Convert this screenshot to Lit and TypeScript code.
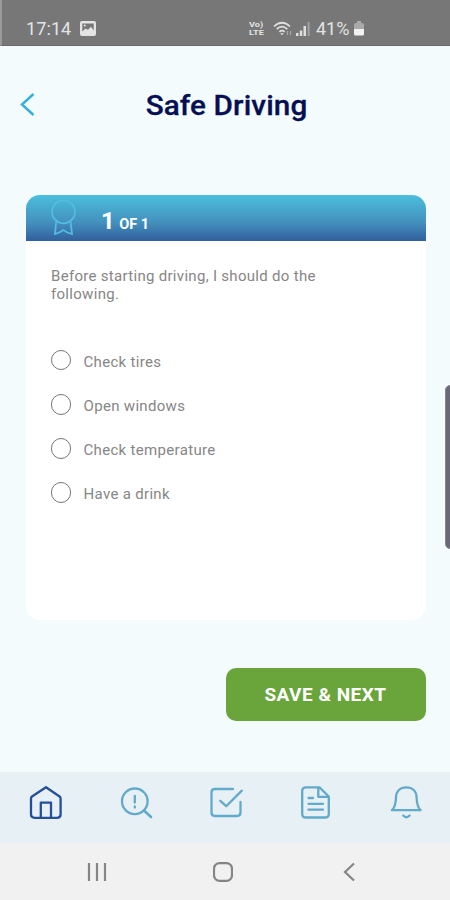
import { LitElement, html, css, svg } from "lit";
import { customElement, state } from "lit/decorators.js";

const OPTIONS = ["Check tires", "Open windows", "Check temperature", "Have a drink"];

const NAV_ICONS = [
  svg`<path d="M18 3.2 L31.6 12.5 Q32.6 13.3 32.6 14.7 V30.5 Q32.6 33.8 29 33.8 H6.6 Q3 33.8 3 30.5 V14.7 Q3 13.3 4 12.5 Z M12.8 33.3 V18.6 H23 V33.3"/>`,
  svg`<circle cx="16.8" cy="17.3" r="12.8"/><path d="M26 26.5 L33 33" stroke-width="2.6"/><path d="M16.8 11.8 V18.6 M16.8 22.4 V23.6"/>`,
  svg`<path d="M25 5 H7 Q3.5 5 3.5 8.5 V28.5 Q3.5 32 7 32 H29 Q32.5 32 32.5 28.5 V18 M12.3 16.8 L18.2 22.2 L33.8 6.6"/>`,
  svg`<path d="M21.5 3.4 H8 Q4.2 3.4 4.2 7.3 V29.7 Q4.2 33.5 8 33.5 H27 Q30.8 33.5 30.8 29.7 V12.5 Z M20.3 4.1 V12.8 H30 M10.5 14 H15 M10.5 19.8 H25 M10.5 25.7 H25"/>`,
  svg`<path d="M4 26.2 C7 23.5 7.8 18.5 8 13.5 C8.2 7.3 12 3.4 18.3 3.4 C24.6 3.4 28.4 7.3 28.6 13.5 C28.8 18.5 29.6 23.5 32.6 26.2 Z M15.2 31.5 Q18.4 35 21.6 31.5"/>`,
];

@customElement("app-root")
export class AppRoot extends LitElement {
  @state() private selected = -1;

  static styles = css`
    :host {
      display: flex;
      flex-direction: column;
      position: relative;
      box-sizing: border-box;
      width: 450px;
      height: 900px;
      overflow: hidden;
      background: #f3fbfd;
      font-family: Roboto, "Liberation Sans", sans-serif;
    }
    svg { display: block; fill: none; flex: none; }
    .status {
      height: 46px;
      box-sizing: border-box;
      padding: 12px 0 0 24px;
      border-left: 2px solid #9b9b9b;
      border-bottom: 1px solid #6b6b6b;
      background: #777;
      display: flex;
      align-items: center;
      color: #e4e4e4;
      font-size: 18px;
    }
    .time { width: 46px; letter-spacing: 0.1px; }
    .photo { margin-left: 8px; }
    .volte {
      margin-left: 153px;
      width: 17px;
      display: grid;
      grid-template-rows: 8px 8px;
      font-size: 8px;
      line-height: 8px;
      font-weight: 700;
    }
    .volte span { transform: scaleX(1.15); transform-origin: left; }
    .wifi { margin-left: 7px; }
    .signal { margin-left: 3px; }
    .pct { margin-left: 6px; width: 35px; }
    .battery { margin-left: 3px; }
    .head {
      height: 118px;
      box-sizing: border-box;
      display: grid;
      grid-template-columns: 72px 1fr 70px;
      align-items: center;
      padding-left: 20px;
    }
    .title {
      margin: 1px 19px 0 0;
      text-align: center;
      font-size: 28px;
      line-height: 34px;
      font-weight: 500;
      letter-spacing: 0.1px;
      -webkit-text-stroke: 0.3px #060f52;
      transform: scaleX(1.06);
      color: #060f52;
    }
    .card {
      margin: 31px 24.5px 0 26px;
      height: 425px;
      border-radius: 14px;
      background: #fff;
      overflow: hidden;
    }
    .banner {
      height: 46px;
      display: flex;
      align-items: center;
      padding-left: 23px;
      background: linear-gradient(#4bbfdd, #4390bd 60%, #315f9d);
      color: #fff;
    }
    .count {
      margin-left: 24px;
      padding-top: 10px;
      font-size: 24px;
      line-height: 28px;
      font-weight: 700;
      white-space: nowrap;
    }
    .count span { font-size: 14.5px; margin-left: -1.5px; }
    .question {
      margin: 27px 0 0 25px;
      width: 290px;
      font-size: 15px;
      line-height: 17.5px;
      letter-spacing: 0.3px;
      color: #868686;
    }
    .options {
      margin-top: 35px;
      padding-left: 24.5px;
    }
    .option {
      height: 44.2px;
      display: flex;
      align-items: center;
      gap: 12.5px;
      font-size: 15px;
      letter-spacing: 0.32px;
      color: #868686;
    }
    .radio {
      width: 20.5px;
      height: 20.5px;
      box-sizing: border-box;
      border: 1.4px solid #777;
      border-radius: 50%;
    }
    .radio.on { box-shadow: inset 0 0 0 4px #fff; background: #2b5a9a; }
    .label { padding-top: 3px; }
    .save {
      align-self: flex-end;
      margin: 48px 24.5px 0 0;
      width: 200px;
      height: 53px;
      padding: 0;
      border: 0;
      border-radius: 10px;
      background: #69a53b;
      color: #fff;
      font: 700 19px/54px Roboto, "Liberation Sans", sans-serif;
      letter-spacing: 0.5px;
    }
    .nav {
      margin-top: auto;
      height: 71px;
      box-sizing: border-box;
      padding: 12px 0 0 0.5px;
      display: grid;
      grid-template-columns: repeat(5, 90px);
      justify-items: center;
      background: #e7f0f5;
      color: #62aac9;
      flex: none;
    }
    .nav svg { stroke: currentColor; stroke-width: 2.3; stroke-linejoin: round; stroke-linecap: round; }
    .nav .active { color: #254f98; }
    .system {
      height: 57px;
      flex: none;
      box-sizing: border-box;
      display: flex;
      align-items: center;
      gap: 106px;
      padding-left: 87px;
      background: #f1f1f1;
    }
    .system svg { stroke: #858585; stroke-width: 2.2; }
    .handle {
      position: absolute;
      right: -5px;
      top: 385px;
      width: 10px;
      height: 164px;
      box-sizing: border-box;
      border: 1px solid #858591;
      border-radius: 5px;
      background: #6a6878;
    }
  `;

  render() {
    return html`
      <div class="status">
        <span class="time">17:14</span>
        <svg class="photo" width="16" height="15" viewBox="0 0 16 15">
          <rect width="16" height="15" rx="2" fill="#e4e4e4" />
          <path d="M2.3 2.5 H13.7 V9.5 L11 5.8 L8 8.8 L5.5 7.5 L2.3 10.5 Z" fill="#777" />
          <circle cx="4.7" cy="4.5" r="1.1" fill="#e4e4e4" />
        </svg>
        <span class="volte"><span>Vo)</span><span>LTE</span></span>
        <svg class="wifi" width="20" height="16" viewBox="0 0 20 16" stroke="#e0e0e0" stroke-width="1.7">
          <path d="M1 5.5 Q9 -2 17 5.5 M3.7 8.2 Q9 3.2 14.3 8.2 M6.4 10.9 Q9 8.5 11.6 10.9" />
          <path d="M7.2 12.2 H10.8 L9 14.3 Z" fill="#e0e0e0" stroke="none" />
          <path d="M14.5 10 V14 M17.5 10 V14" stroke="#aaa" stroke-width="1.2" />
        </svg>
        <svg class="signal" width="14" height="14" viewBox="0 0 14 14">
          <path d="M0 11 H2.5 V14 H0 Z M3.8 8.5 H6.3 V14 H3.8 Z M7.5 4 H10 V14 H7.5 Z" fill="#dedede" />
          <path d="M11.6 0 H13.7 V14 H11.6 Z" fill="#a0a0a0" />
        </svg>
        <span class="pct">41%</span>
        <svg class="battery" width="10" height="15" viewBox="0 0 10 15">
          <path d="M3 0 H7 V2 H8 Q10 2 10 4 V8 H0 V4 Q0 2 2 2 H3 Z" fill="#aaa" />
          <path d="M0 8 H10 V13 Q10 14.5 8.5 14.5 H1.5 Q0 14.5 0 13 Z" fill="#f2f2f2" />
        </svg>
      </div>
      <header class="head">
        <svg width="15" height="24" viewBox="0 0 15 24" stroke="#35b1d5" stroke-width="2.5">
          <path d="M13.5 1 L2 11.5 L13.5 22" />
        </svg>
        <h1 class="title">Safe Driving</h1>
      </header>
      <main class="card">
        <div class="banner">
          <svg width="28" height="38" viewBox="0 0 28 38" stroke="#52bce2" stroke-width="1.8">
            <circle cx="14.5" cy="12.8" r="11.5" />
            <path d="M7.2 22.3 L6 35 L10.2 33.5 L14.4 31 L18.4 33.5 L23 35 L21.5 22.3" />
          </svg>
          <div class="count">1 <span>OF 1</span></div>
        </div>
        <div class="question">Before starting driving, I should do the following.</div>
        <div class="options">
          ${OPTIONS.map(
            (text, i) => html`<div class="option" @click=${() => (this.selected = i)}>
              <span class="radio ${this.selected === i ? "on" : ""}"></span>
              <span class="label">${text}</span>
            </div>`
          )}
        </div>
      </main>
      <button class="save">SAVE &amp; NEXT</button>
      <nav class="nav">
        ${NAV_ICONS.map(
          (icon, i) => html`<svg class=${i === 0 ? "active" : ""} width="36" height="38" viewBox="0 0 36 38">${icon}</svg>`
        )}
      </nav>
      <div class="system">
        <svg width="20" height="18" viewBox="0 0 20 18">
          <path d="M2 0 V18 M10 0 V18 M18 0 V18" />
        </svg>
        <svg width="20" height="20" viewBox="0 0 20 20">
          <rect x="1" y="1.2" width="18" height="17.6" rx="5.5" />
        </svg>
        <svg width="20" height="20" viewBox="0 0 20 20">
          <path d="M15 1.5 L6 10 L15 18.5" />
        </svg>
      </div>
      <div class="handle"></div>
    `;
  }
}
